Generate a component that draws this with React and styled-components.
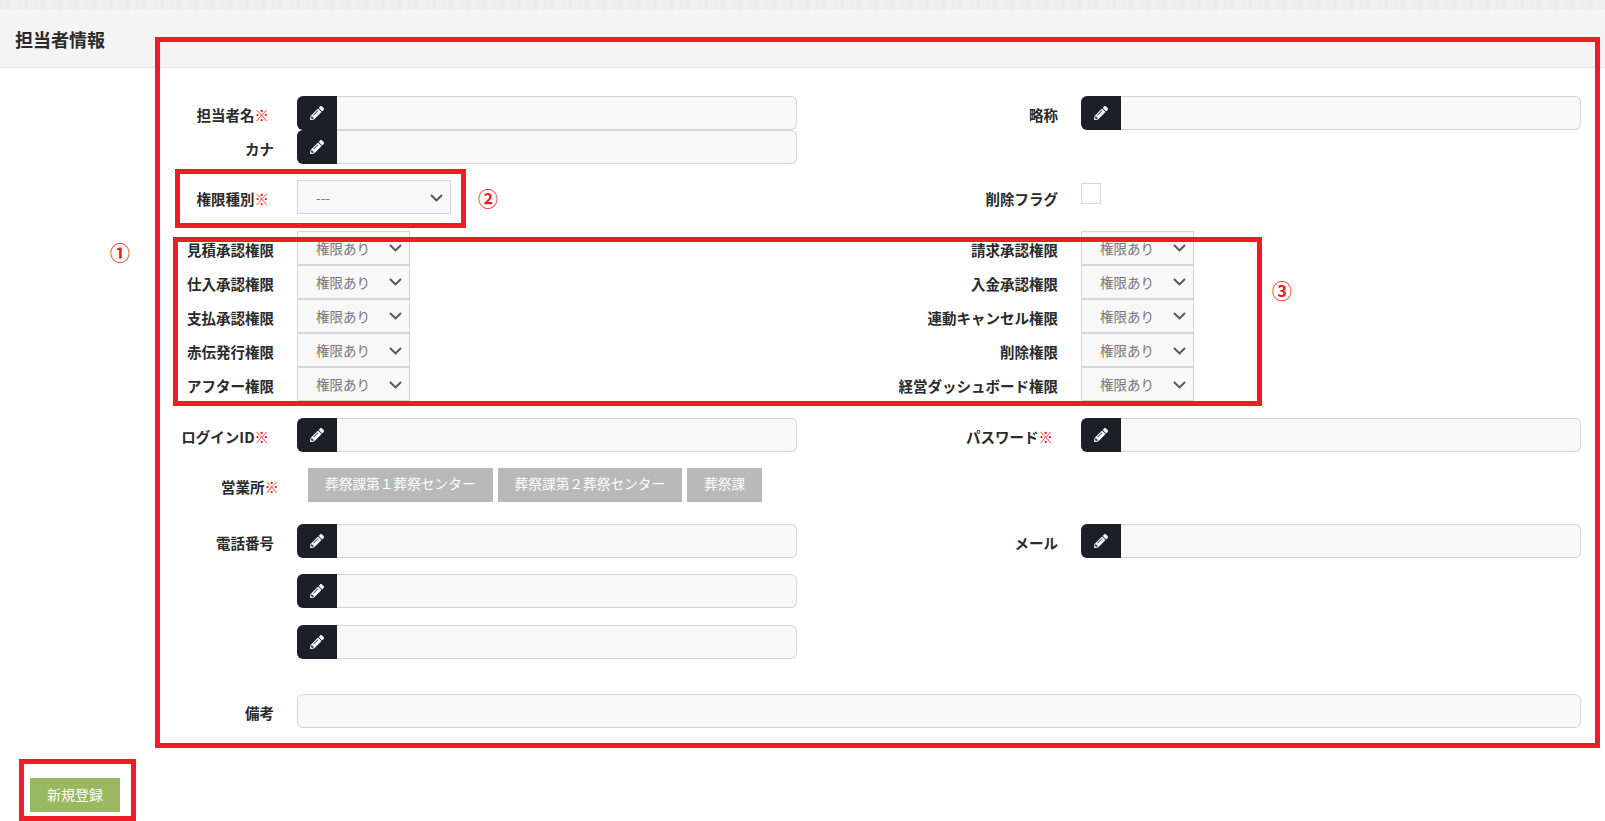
import React from "react";
import styled, { createGlobalStyle } from "styled-components";
import { FaPencilAlt } from "react-icons/fa";

const GlobalStyle = createGlobalStyle`
  html, body {
    margin: 0;
    padding: 0;
    background: #fff;
    overflow: hidden;
  }
  body {
    font-family: "Noto Sans CJK JP", "Noto Sans", sans-serif;
    color: #2a2a2a;
  }
`;

const Page = styled.div`
  position: relative;
  width: 1605px;
  height: 821px;
  padding-top: 10px;
  box-sizing: border-box;
  background: #fff;
`;

const TopStrip = styled.div`
  position: absolute;
  top: 0;
  left: 0;
  right: 0;
  height: 10px;
  background: repeating-linear-gradient(90deg, #eeeeee 0 7px, #ebebeb 7px 11px, #f0f0f0 11px 17px);
`;

const Header = styled.div`
  height: 58px;
  box-sizing: border-box;
  padding-left: 15px;
  display: flex;
  align-items: center;
  background: #f4f4f4;
  border-bottom: 1px solid #e3e3e3;
`;

const Title = styled.h2`
  margin: 0;
  font-size: 18px;
  font-weight: 700;
  line-height: 1;
`;

const Form = styled.div`
  padding-top: 28px;
`;

const Row = styled.div`
  display: grid;
  grid-template-columns: 274px 500px 238px 500px;
  column-gap: 23px;
  height: ${(p) => p.$height || 34}px;
  margin-top: ${(p) => p.$top || 0}px;
`;

const Label = styled.label`
  display: flex;
  align-items: center;
  justify-content: flex-end;
  padding: 4px ${(p) => p.$right || 0}px 0 0;
  margin-right: ${(p) => p.$over || 0}px;
  font-size: 14.5px;
  font-weight: 700;
  line-height: 1;
  white-space: nowrap;
`;

const Req = styled.span`
  color: #f01414;
  font-weight: 400;
`;

const InputGroup = styled.div`
  display: flex;
  height: 34px;
  grid-column: ${(p) => p.$span || "auto"};
`;

const IconBox = styled.div`
  width: 40px;
  flex: none;
  display: flex;
  align-items: center;
  justify-content: center;
  box-sizing: border-box;
  background: #1c1f27;
  border-radius: 6px 0 0 6px;
  color: #fff;
  font-size: 14px;
`;

const TextInput = styled.input`
  flex: 1;
  min-width: 0;
  box-sizing: border-box;
  height: 100%;
  margin: 0;
  padding: 0 12px;
  background: #f8f8f8;
  border: 1px solid #d6d6d6;
  border-left: ${(p) => (p.$alone ? "1px solid #d6d6d6" : "none")};
  border-radius: ${(p) => (p.$alone ? "6px" : "0 6px 6px 0")};
  outline: none;
`;

const SelectWrap = styled.div`
  position: relative;
  width: ${(p) => p.$width}px;
  height: ${(p) => p.$height || 34}px;
`;

const Select = styled.select`
  appearance: none;
  display: block;
  width: 100%;
  height: 100%;
  box-sizing: border-box;
  margin: 0;
  padding: 0 0 0 18px;
  background: #f8f8f8;
  border: 1px solid #d6d6d6;
  border-radius: 0;
  color: #777;
  font-family: inherit;
  font-size: 13.5px;
  outline: none;
`;

const Chevron = styled.svg`
  position: absolute;
  right: 8px;
  top: 50%;
  width: 13px;
  height: 8px;
  margin-top: -3.5px;
  pointer-events: none;
  fill: none;
  stroke: #555;
  stroke-width: 1.9;
`;

const Check = styled.input`
  appearance: none;
  display: block;
  box-sizing: border-box;
  width: 20px;
  height: 21px;
  margin: 3px 0 0;
  background: #fff;
  border: 1px solid #d6d6d6;
`;

const Tags = styled.div`
  display: flex;
  gap: 5px;
  margin-left: 11px;
  grid-column: 2 / -1;
`;

const Tag = styled.button`
  height: 34px;
  padding: 0 17px 3px;
  background: #b9b9b9;
  border: none;
  color: #fff;
  font-family: inherit;
  font-size: 13.7px;
  white-space: nowrap;
`;

const Footer = styled.div`
  margin-top: 50px;
  padding-left: 30px;
`;

const SubmitButton = styled.button`
  display: block;
  width: 90px;
  height: 34px;
  padding: 0 0 2px;
  background: #99b85f;
  border: none;
  color: #fff;
  font-family: inherit;
  font-size: 14px;
`;

// 赤枠の注記は画面の上に重なる
const Callout = styled.div`
  position: absolute;
  left: ${(p) => p.$x}px;
  top: ${(p) => p.$y}px;
  width: ${(p) => p.$w}px;
  height: ${(p) => p.$h}px;
  box-sizing: border-box;
  border: 5px solid #ee1c25;
  pointer-events: none;
`;

const Mark = styled.span`
  position: absolute;
  left: ${(p) => p.$x}px;
  top: ${(p) => p.$y}px;
  transform: translate(-50%, -50%);
  color: #ee1c25;
  font-size: 20px;
  font-weight: 700;
  line-height: 1;
  pointer-events: none;
`;

const PermSpacer = styled.div`
  height: 17px;
`;

const Pencil = () => (
  <IconBox>
    <FaPencilAlt />
  </IconBox>
);

const TextField = ({ span }) => (
  <InputGroup $span={span}>
    <Pencil />
    <TextInput type="text" />
  </InputGroup>
);

const ArrowDown = () => (
  <Chevron viewBox="0 0 13 8">
    <path d="M1 1l5.5 5.5L12 1" />
  </Chevron>
);

const PermSelect = () => (
  <SelectWrap $width={113} $height={33.6}>
    <Select defaultValue="権限あり">
      <option>権限あり</option>
      <option>権限なし</option>
    </Select>
    <ArrowDown />
  </SelectWrap>
);

const permRows = [
  ["見積承認権限", "請求承認権限"],
  ["仕入承認権限", "入金承認権限"],
  ["支払承認権限", "連動キャンセル権限"],
  ["赤伝発行権限", "削除権限"],
  ["アフター権限", "経営ダッシュボード権限"],
];

export default function App() {
  return (
    <Page>
      <GlobalStyle />
      <TopStrip />
      <Header>
        <Title>担当者情報</Title>
      </Header>

      <Form>
        <Row>
          <Label $right={5}>
            担当者名<Req>※</Req>
          </Label>
          <TextField />
          <Label>略称</Label>
          <TextField />
        </Row>
        <Row>
          <Label>カナ</Label>
          <TextField />
        </Row>

        <Row $top={16}>
          <Label $right={5}>
            権限種別<Req>※</Req>
          </Label>
          <SelectWrap $width={154}>
            <Select defaultValue="---">
              <option>---</option>
            </Select>
            <ArrowDown />
          </SelectWrap>
          <Label>削除フラグ</Label>
          <Check type="checkbox" />
        </Row>

        <PermSpacer />
        {permRows.map(([left, right]) => (
          <Row key={left} $height={34.1}>
            <Label>{left}</Label>
            <PermSelect />
            <Label>{right}</Label>
            <PermSelect />
          </Row>
        ))}

        <Row $top={16.5}>
          <Label $right={5}>
            ログインID<Req>※</Req>
          </Label>
          <TextField />
          <Label $right={5}>
            パスワード<Req>※</Req>
          </Label>
          <TextField />
        </Row>

        <Row $top={16}>
          <Label $over={-5}>
            営業所<Req>※</Req>
          </Label>
          <Tags>
            <Tag>葬祭課第１葬祭センター</Tag>
            <Tag>葬祭課第２葬祭センター</Tag>
            <Tag>葬祭課</Tag>
          </Tags>
        </Row>

        <Row $top={22.5}>
          <Label>電話番号</Label>
          <TextField />
          <Label>メール</Label>
          <TextField />
        </Row>
        <Row $top={15.5}>
          <div />
          <TextField />
        </Row>
        <Row $top={17}>
          <div />
          <TextField />
        </Row>

        <Row $top={35}>
          <Label>備考</Label>
          <InputGroup $span="2 / -1">
            <TextInput type="text" $alone />
          </InputGroup>
        </Row>
      </Form>

      <Footer>
        <SubmitButton>新規登録</SubmitButton>
      </Footer>

      <Callout $x={155} $y={37} $w={1445} $h={711} />
      <Callout $x={175} $y={169} $w={291} $h={59} />
      <Callout $x={173} $y={237} $w={1089} $h={169} />
      <Callout $x={19} $y={759} $w={117} $h={62} />
      <Mark $x={120} $y={253}>①</Mark>
      <Mark $x={488} $y={199}>②</Mark>
      <Mark $x={1282} $y={291}>③</Mark>
    </Page>
  );
}
